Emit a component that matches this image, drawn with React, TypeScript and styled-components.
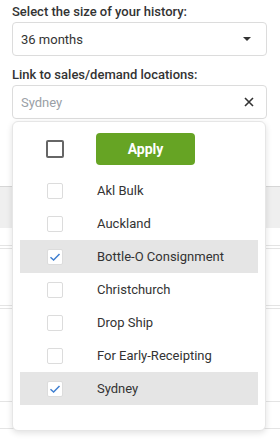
import React from 'react';
import styled, { createGlobalStyle } from 'styled-components';

const GlobalStyle = createGlobalStyle`
  body {
    margin: 0;
    background: #fff;
    font-family: Roboto, "Liberation Sans", Arial, sans-serif;
    color: #333;
  }
`;

const Page = styled.div`
  width: 280px;
  height: 441px;
  overflow: hidden;
  position: relative;
`;

const Form = styled.div`
  padding: 4px 13px 0 12px;
`;

const Label = styled.div`
  font-size: 13px;
  font-weight: 500;
  line-height: 16px;
  color: #333;
  margin-bottom: 2px;
`;

const Field = styled.div<{ $gap?: number }>`
  margin-bottom: ${(p) => p.$gap ?? 0}px;
  position: relative;
`;

const Box = styled.div<{ $placeholder?: boolean }>`
  height: 34px;
  box-sizing: border-box;
  border: 1px solid #dcdcdc;
  border-radius: 4px;
  display: flex;
  align-items: center;
  justify-content: space-between;
  padding: 0 10px 0 8px;
  font-size: 13px;
  color: ${(p) => (p.$placeholder ? '#9aa0a6' : '#333')};
  background: #fff;
`;

const Caret = styled.span`
  width: 0;
  height: 0;
  border-left: 4px solid transparent;
  border-right: 4px solid transparent;
  border-top: 4px solid #333;
  margin-right: 5px;
`;

const Popup = styled.div`
  position: absolute;
  top: calc(100% + 2px);
  left: 0;
  width: 254px;
  height: 310px;
  box-sizing: border-box;
  background: #fff;
  border: 1px solid #e6e6e6;
  border-radius: 6px;
  box-shadow: 0 2px 6px rgba(0, 0, 0, 0.12);
  z-index: 10;
`;

const Header = styled.div`
  display: flex;
  align-items: center;
  gap: 32px;
  padding: 11px 0 0 33px;
  height: 32px;
`;

const HeadCheck = styled.span`
  width: 18px;
  height: 18px;
  box-sizing: border-box;
  border: 2px solid #666;
  border-radius: 2px;
`;

const ApplyButton = styled.button`
  width: 99px;
  height: 32px;
  border: none;
  border-radius: 4px;
  background: #66a424;
  color: #fff;
  font-family: Roboto, "Liberation Sans", Arial, sans-serif;
  font-size: 14px;
  font-weight: 700;
  padding: 0;
`;

const List = styled.div`
  margin-top: 9px;
  padding: 0 7px;
`;

const Option = styled.div<{ $selected?: boolean }>`
  height: 33px;
  display: flex;
  align-items: center;
  background: ${(p) => (p.$selected ? '#e5e5e5' : 'transparent')};
  font-size: 13px;
  color: #333;
`;

const Check = styled.span`
  width: 16px;
  height: 16px;
  box-sizing: border-box;
  border: 1px solid #dcdcdc;
  border-radius: 2px;
  background: #fff;
  margin: 0 34px 0 27px;
  display: flex;
  align-items: center;
  justify-content: center;
`;

const Backdrop = styled.div`
  margin-top: 67px;
`;

const HeadBand = styled.div`
  height: 42px;
  background: #efefef;
  border-top: 1px solid #d6d6d6;
  box-sizing: border-box;
`;

const Row = styled.div<{ $h: number }>`
  height: ${(p) => p.$h}px;
  border-bottom: 1px solid #e4e4e4;
  box-sizing: border-box;
`;

const options = [
  { name: 'Akl Bulk', checked: false },
  { name: 'Auckland', checked: false },
  { name: 'Bottle-O Consignment', checked: true },
  { name: 'Christchurch', checked: false },
  { name: 'Drop Ship', checked: false },
  { name: 'For Early-Receipting', checked: false },
  { name: 'Sydney', checked: true },
];

const App: React.FC = () => {
  return (
    <Page>
      <GlobalStyle />
      <Form>
        <Field $gap={11}>
          <Label>Select the size of your history:</Label>
          <Box>
            36 months
            <Caret />
          </Box>
        </Field>
        <Field>
          <Label>Link to sales/demand locations:</Label>
          <Box $placeholder>
            Sydney
            <svg width="10" height="10" viewBox="0 0 10 10" style={{ marginRight: 2 }}>
              <path d="M1 1 L9 9 M9 1 L1 9" stroke="#333" strokeWidth="1.6" />
            </svg>
          </Box>
          <Popup>
            <Header>
              <HeadCheck />
              <ApplyButton>Apply</ApplyButton>
            </Header>
            <List>
              {options.map((o) => (
                <Option key={o.name} $selected={o.checked}>
                  <Check>
                    {o.checked && (
                      <svg width="12" height="10" viewBox="0 0 12 10">
                        <path d="M1.5 5.2 L4.6 8 L10.5 2" stroke="#3f7fd0" strokeWidth="1.5" fill="none" />
                      </svg>
                    )}
                  </Check>
                  {o.name}
                </Option>
              ))}
            </List>
          </Popup>
        </Field>
      </Form>
      <Backdrop>
        <HeadBand />
        <Row $h={18} />
        <Row $h={3} />
        <Row $h={57} />
        <Row $h={3} />
        <Row $h={93} />
        <Row $h={27} />
      </Backdrop>
    </Page>
  );
};

export default App;
